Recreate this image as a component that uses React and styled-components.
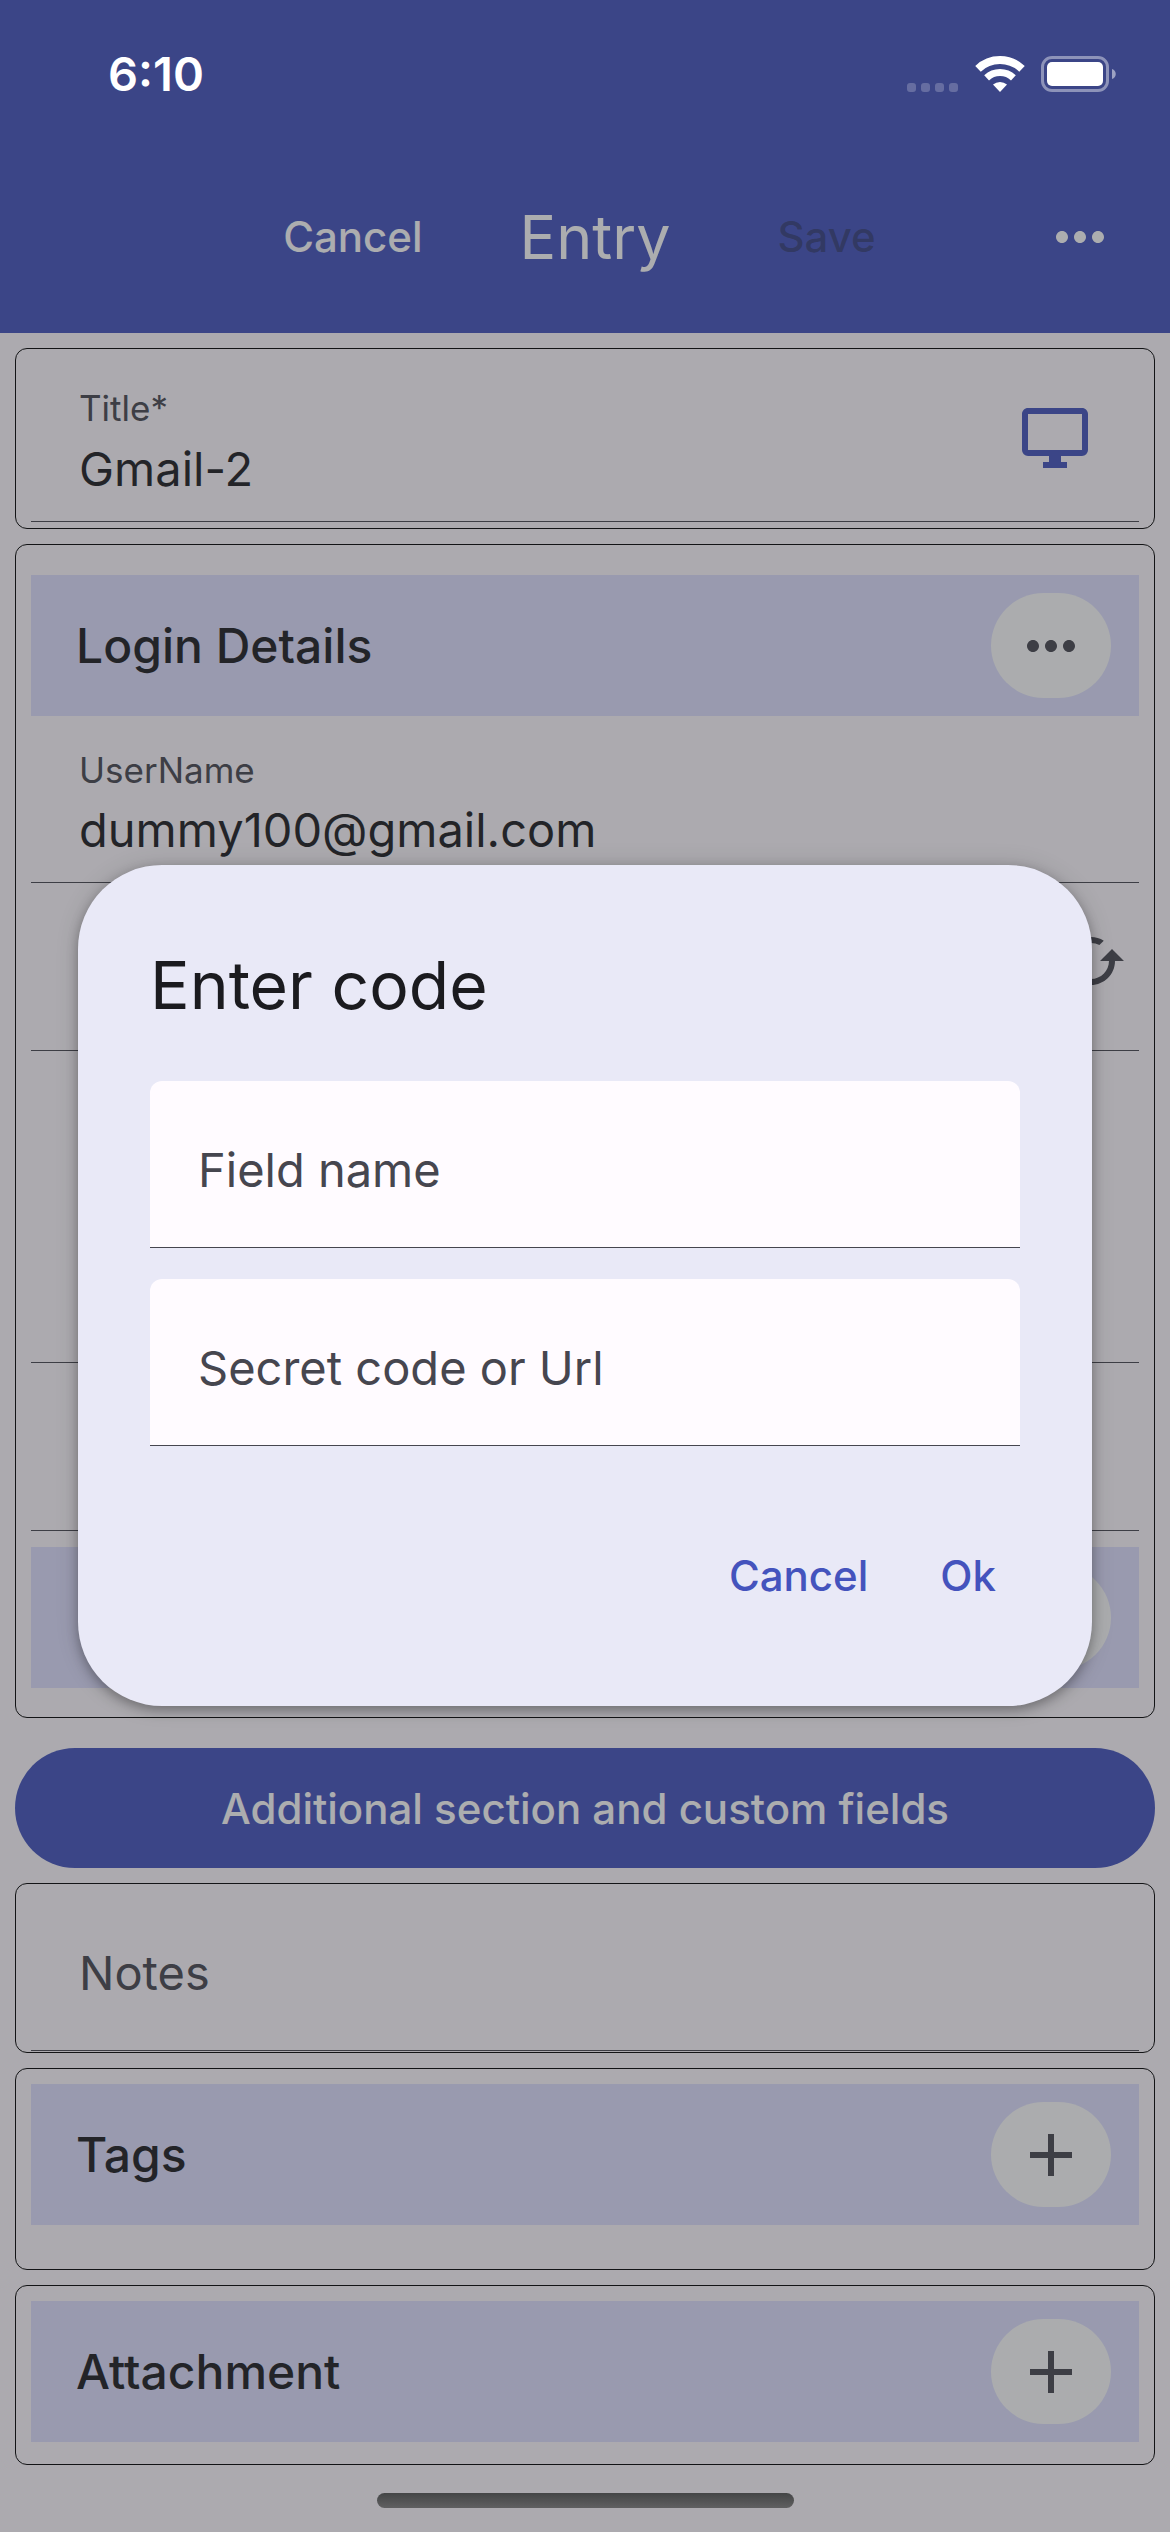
import React from "react";
import styled, { createGlobalStyle } from "styled-components";
import { MdAdd, MdCached, MdMoreHoriz } from "react-icons/md";

const color = {
  primary: "#4453bd",
  onPrimary: "#ffffff",
  surface: "#fffbff",
  band: "#dfe0ff",
  chip: "#fdfdfd",
  text: "#1b1b1f",
  muted: "#46464f",
  outline: "#000000",
  dialog: "#e9e9f7",
};

const GlobalStyle = createGlobalStyle`
  *, *::before, *::after { box-sizing: border-box; }
  body { margin: 0; background: ${color.surface}; }
  body, button, input {
    font-family: Inter, "Liberation Sans", Arial, sans-serif;
  }
  h1, h2 { margin: 0; }
`;

const Screen = styled.div`
  position: relative;
  display: flex;
  flex-direction: column;
  min-height: 100vh;
  background: ${color.surface};
  color: ${color.text};
`;

const Header = styled.header`
  background: ${color.primary};
`;

const StatusBar = styled.div`
  position: relative;
  z-index: 2;
  display: flex;
  align-items: center;
  justify-content: space-between;
  height: 141px;
  padding: 7px 54px 0 108px;
  color: #ffffff;
`;

const Clock = styled.time`
  font-size: 47px;
  font-weight: 600;
  line-height: 64px;
`;

const StatusIcons = styled.div`
  display: flex;
  gap: 16px;
`;

const AppBar = styled.div`
  display: grid;
  grid-template-columns: 1fr auto 1fr;
  align-items: center;
  gap: 97px;
  height: 192px;
  padding: 0 54px 0 74px;
  color: ${color.onPrimary};
`;

const AppBarTitle = styled.h1`
  font-size: 61px;
  font-weight: 400;
  line-height: 80px;
`;

const AppBarStart = styled.div`
  display: flex;
  justify-content: flex-end;
`;

const AppBarEnd = styled.div`
  display: flex;
  align-items: center;
  justify-content: space-between;
  padding-left: 10px;
`;

const PlainButton = styled.button`
  display: flex;
  align-items: center;
  justify-content: center;
  padding: 0;
  border: 0;
  background: transparent;
  color: inherit;
`;

const TextButton = styled(PlainButton)`
  font-size: 42px;
  font-weight: 500;
  line-height: 60px;

  &:disabled {
    color: rgba(27, 27, 31, 0.4);
  }
`;

const Content = styled.main`
  display: flex;
  flex-direction: column;
  flex: 1;
  gap: 15px;
  padding: 15px;
`;

const Card = styled.section`
  padding: ${(p) => p.$top || 0}px 15px ${(p) => p.$bottom || 0}px;
  border: 1px solid ${color.outline};
  border-radius: 12px;
`;

const Band = styled.div`
  display: flex;
  align-items: center;
  justify-content: space-between;
  height: 141px;
  margin-top: ${(p) => p.$gap || 0}px;
  padding: 0 28px 0 45px;
  background: ${color.band};
`;

const BandTitle = styled.h2`
  font-size: 48px;
  font-weight: 500;
  line-height: 72px;
`;

const ChipButton = styled(PlainButton)`
  width: 120px;
  height: 105px;
  border-radius: 54px;
  background: ${color.chip};
  color: ${color.muted};
`;

const FieldRow = styled.div`
  display: flex;
  align-items: center;
  height: ${(p) => p.$height || 168}px;
  padding: 0 ${(p) => p.$inset || 0}px 0 48px;
  border-bottom: 1px solid ${color.muted};
`;

const FieldBody = styled.div`
  flex: 1;
  min-width: 0;
  display: flex;
  flex-direction: column;
  padding: 30px 0 17px;
`;

const FieldLabel = styled.label`
  color: ${color.muted};
  font-size: 35px;
  line-height: 48px;
`;

const FieldInput = styled.input`
  width: 100%;
  height: 72px;
  padding: 0;
  border: 0;
  outline: 0;
  background: transparent;
  color: ${color.text};
  font-size: 47px;
`;

const PromptInput = styled.input`
  display: block;
  width: 100%;
  height: 167px;
  padding: 11px 48px 0;
  border: 0;
  border-bottom: 1px solid ${color.muted};
  border-radius: ${(p) => (p.$filled ? "12px 12px 0 0" : "0")};
  outline: 0;
  background: ${(p) => (p.$filled ? color.surface : "transparent")};
  color: ${color.text};
  font-size: 47px;

  &::placeholder {
    color: ${color.muted};
    opacity: 1;
  }
`;

const RaisedIconButton = styled(PlainButton)`
  margin-bottom: ${(p) => p.$lift || 0}px;
  color: ${(p) => p.$tone};
`;

const WideButton = styled(PlainButton)`
  height: 120px;
  margin-top: 15px;
  border-radius: 60px;
  background: ${color.primary};
  color: ${color.onPrimary};
  font-size: 42px;
  font-weight: 500;
`;

const HomeIndicator = styled.div`
  position: relative;
  z-index: 2;
  align-self: center;
  width: 417px;
  height: 15px;
  margin: 13px 0 24px;
  border-radius: 8px;
  background: linear-gradient(#444546, #606061);
`;

const Scrim = styled.div`
  position: absolute;
  inset: 0;
  z-index: 1;
  display: flex;
  align-items: center;
  justify-content: center;
  padding: 141px 78px 102px;
  background: rgba(48, 49, 54, 0.4);
`;

const Dialog = styled.form`
  flex: 1;
  display: flex;
  flex-direction: column;
  padding: 72px 72px 70px;
  border-radius: 84px;
  background: ${color.dialog};
  box-shadow: 0 4px 12px rgba(0, 0, 0, 0.3), 0 0 24px rgba(0, 0, 0, 0.12);
`;

const DialogTitle = styled.h2`
  font-size: 66px;
  font-weight: 400;
  line-height: 96px;
`;

const DialogFields = styled.div`
  display: flex;
  flex-direction: column;
  gap: 31px;
  margin-top: 48px;
`;

const DialogActions = styled.div`
  display: flex;
  justify-content: flex-end;
  gap: 24px;
  margin-top: 70px;
`;

const DialogButton = styled(TextButton)`
  height: 120px;
  padding: 0 24px;
  color: ${color.primary};
`;

const SignalDots = () => (
  <svg width="52" height="36" viewBox="0 0 52 36" fill="#ffffff" fillOpacity="0.22" aria-hidden="true">
    {[0, 14, 28, 42].map((x) => (
      <rect key={x} x={x} y="27" width="9" height="9" rx="3" />
    ))}
  </svg>
);

const WifiIcon = () => (
  <svg width="50" height="36" viewBox="0 0 50 36" fill="none" stroke="#ffffff" aria-hidden="true">
    <path d="M3 12.8A32 32 0 0 1 47 12.8" strokeWidth="8" />
    <path d="M11.6 21.9A19.5 19.5 0 0 1 38.4 21.9" strokeWidth="7" />
    <path d="M25 36L18 28.5A11 11 0 0 1 32 28.5Z" fill="#ffffff" stroke="none" />
  </svg>
);

const BatteryIcon = () => (
  <svg width="75" height="36" viewBox="0 0 75 36" aria-hidden="true">
    <rect x="1.5" y="1.5" width="65" height="33" rx="9.5" fill="none" stroke="#ffffff" strokeOpacity="0.42" strokeWidth="3" />
    <rect x="6" y="6" width="56" height="24" rx="5" fill="#ffffff" />
    <path d="M71 13C76 14.5 76 21.5 71 23Z" fill="#ffffff" fillOpacity="0.5" />
  </svg>
);

const MonitorIcon = () => (
  <svg width="72" height="72" viewBox="0 0 24 24" fill="currentColor" aria-hidden="true">
    <path d="M21 16H3V4h18m0-2H3c-1.11 0-2 .89-2 2v12a2 2 0 0 0 2 2h7v2H8v2h8v-2h-2v-2h7a2 2 0 0 0 2-2V4c0-1.11-.9-2-2-2z" />
  </svg>
);

function Field({ id, label, value, height, inset, action }) {
  return (
    <FieldRow $height={height} $inset={inset}>
      <FieldBody>
        <FieldLabel htmlFor={id}>{label}</FieldLabel>
        <FieldInput id={id} defaultValue={value} />
      </FieldBody>
      {action}
    </FieldRow>
  );
}

function SectionBand({ title, icon: Icon, label, gap }) {
  return (
    <Band $gap={gap}>
      <BandTitle>{title}</BandTitle>
      <ChipButton type="button" aria-label={label}>
        <Icon size={72} />
      </ChipButton>
    </Band>
  );
}

export default function App() {
  return (
    <Screen>
      <GlobalStyle />
      <Header>
        <StatusBar>
          <Clock>6:10</Clock>
          <StatusIcons>
            <SignalDots />
            <WifiIcon />
            <BatteryIcon />
          </StatusIcons>
        </StatusBar>
        <AppBar>
          <AppBarStart>
            <TextButton type="button">Cancel</TextButton>
          </AppBarStart>
          <AppBarTitle>Entry</AppBarTitle>
          <AppBarEnd>
            <TextButton type="button" disabled>Save</TextButton>
            <PlainButton type="button" aria-label="More options">
              <MdMoreHoriz size={72} />
            </PlainButton>
          </AppBarEnd>
        </AppBar>
      </Header>

      <Content>
        <Card $top={5} $bottom={6}>
          <Field
            id="title"
            label="Title*"
            value="Gmail-2"
            inset={48}
            action={
              <RaisedIconButton type="button" aria-label="Choose icon" $tone={color.primary}>
                <MonitorIcon />
              </RaisedIconButton>
            }
          />
        </Card>

        <Card $top={30} $bottom={29}>
          <SectionBand title="Login Details" icon={MdMoreHoriz} label="Section menu" />
          <Field id="username" label="UserName" value="dummy100@gmail.com" height={167} />
          <FieldRow $inset={12}>
            <FieldInput type="password" aria-label="Password" />
            <RaisedIconButton type="button" aria-label="Generate password" $tone={color.muted} $lift={12}>
              <MdCached size={72} />
            </RaisedIconButton>
          </FieldRow>
          <FieldRow $height={312} />
          <FieldRow />
          <SectionBand icon={MdAdd} label="Add to section" gap={16} />
        </Card>

        <WideButton type="button">Additional section and custom fields</WideButton>

        <Card $bottom={1}>
          <PromptInput aria-label="Notes" placeholder="Notes" />
        </Card>

        <Card $top={15} $bottom={44}>
          <SectionBand title="Tags" icon={MdAdd} label="Add tag" />
        </Card>

        <Card $top={15} $bottom={22}>
          <SectionBand title="Attachment" icon={MdAdd} label="Add attachment" />
        </Card>
      </Content>
      <HomeIndicator />

      <Scrim>
        <Dialog role="dialog" aria-modal="true" aria-labelledby="dialog-title" onSubmit={(e) => e.preventDefault()}>
          <DialogTitle id="dialog-title">Enter code</DialogTitle>
          <DialogFields>
            <PromptInput $filled aria-label="Field name" placeholder="Field name" />
            <PromptInput $filled aria-label="Secret code or Url" placeholder="Secret code or Url" />
          </DialogFields>
          <DialogActions>
            <DialogButton type="button">Cancel</DialogButton>
            <DialogButton type="submit">Ok</DialogButton>
          </DialogActions>
        </Dialog>
      </Scrim>
    </Screen>
  );
}
